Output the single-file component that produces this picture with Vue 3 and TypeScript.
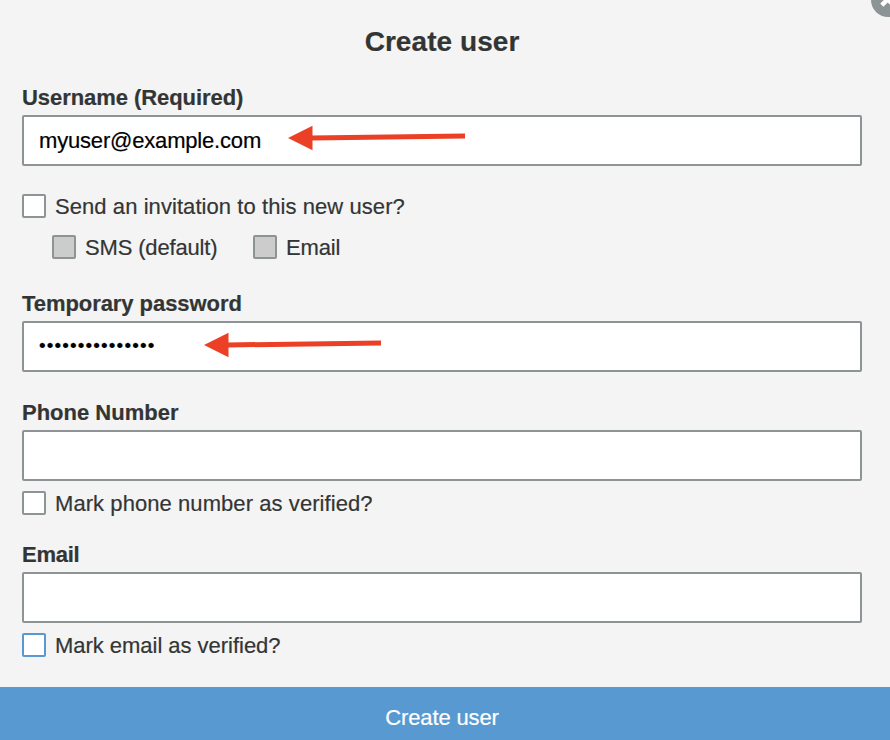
<script setup lang="ts">
import { ref } from 'vue'

const username = ref('myuser@example.com')
const password = ref('Passw0rd!Temp12')
const phone = ref('')
const email = ref('')
const sendInvite = ref(false)
</script>

<template>
  <form class="dialog" @submit.prevent>
    <button class="close" type="button" aria-label="Close">
      <svg width="34" height="34" viewBox="0 0 34 34">
        <circle cx="17" cy="17" r="17" fill="#8c9496" />
        <path d="M10.8 22.2L22.6 10.4M10.8 10.4L22.6 22.2" stroke="#fff" stroke-width="4.5" />
      </svg>
    </button>
    <h1>Create user</h1>

    <section class="field username">
      <label class="title t-user" for="username">Username (Required)</label>
      <div class="control">
        <input id="username" v-model="username" class="text" type="text" />
        <svg class="arrow first" width="178" height="26" viewBox="0 0 178 26">
          <path d="M0 13L24.5 0.7V25.3Z" fill="#eb4026" />
          <path d="M23 13L177 11" stroke="#eb4026" stroke-width="5" />
        </svg>
      </div>
    </section>

    <div class="invite">
      <label class="check"><input v-model="sendInvite" type="checkbox" /><span class="c-send">Send an invitation to this new user?</span></label>
      <div class="channels">
        <label class="check sms"><input type="checkbox" disabled /><span class="c-sms">SMS (default)</span></label>
        <label class="check"><input type="checkbox" disabled /><span class="c-email">Email</span></label>
      </div>
    </div>

    <section class="field password">
      <label class="title t-pass" for="password">Temporary password</label>
      <div class="control">
        <input id="password" v-model="password" class="text secret" type="password" />
        <svg class="arrow second" width="178" height="26" viewBox="0 0 178 26">
          <path d="M0 13L24.5 0.7V25.3Z" fill="#eb4026" />
          <path d="M23 13L177 11" stroke="#eb4026" stroke-width="5" />
        </svg>
      </div>
    </section>

    <section class="field phone">
      <label class="title" for="phone">Phone Number</label>
      <input id="phone" v-model="phone" class="text" type="text" />
      <label class="check"><input type="checkbox" /><span class="c-phone">Mark phone number as verified?</span></label>
    </section>

    <section class="field">
      <label class="title t-email" for="email">Email</label>
      <input id="email" v-model="email" class="text" type="text" />
      <label class="check"><input class="active" type="checkbox" /><span class="c-mark">Mark email as verified?</span></label>
    </section>

    <button class="submit" type="submit"><span>Create user</span></button>
  </form>
</template>

<style>
body {
  background: #f4f4f4;
}
</style>

<style scoped>
.dialog {
  position: relative;
  box-sizing: border-box;
  display: flex;
  flex-direction: column;
  height: 740px;
  overflow: hidden;
  padding: 22px 28px 0 22px;
  background: #f4f4f4;
  color: #333535;
  font: 22px/26px "Liberation Sans", Arial, sans-serif;
  -webkit-text-stroke-width: 0.2px;
}

.close {
  position: absolute;
  top: -17px;
  right: -15px;
  width: 34px;
  height: 34px;
  padding: 0;
  border: 0;
  background: none;
}

.close svg,
.arrow {
  display: block;
}

h1 {
  margin: 0 0 21px;
  font-size: 28px;
  line-height: 40px;
  letter-spacing: 0.06px;
  text-align: center;
}

.field {
  display: flex;
  flex-direction: column;
}

.title {
  height: 26px;
  margin-bottom: 6px;
  line-height: 30px;
  font-weight: 700;
}

.t-user,
.t-pass {
  letter-spacing: -0.06px;
}

.t-email {
  letter-spacing: -0.25px;
}

.control {
  position: relative;
}

.text {
  display: block;
  box-sizing: border-box;
  width: 100%;
  height: 51px;
  margin: 0;
  padding: 0 15px;
  border: 2px solid #8e9395;
  border-radius: 2px;
  outline: 0;
  background: #fff;
  color: #000;
  font: inherit;
  letter-spacing: -0.18px;
}

.secret {
  padding-bottom: 2px;
  font-size: 19px;
  letter-spacing: 1.11px;
}

.arrow {
  position: absolute;
}

.arrow.first {
  top: 10px;
  left: 265.5px;
}

.arrow.second {
  top: 11px;
  left: 181.5px;
}

.check {
  display: flex;
  align-items: center;
  gap: 9px;
  height: 24px;
}

.check input {
  flex: none;
  appearance: none;
  box-sizing: border-box;
  width: 24px;
  height: 24px;
  margin: 0;
  border: 2px solid #8e9395;
  border-radius: 2px;
  background: #fff;
}

.check input:disabled {
  background: #ccc;
}

.check input.active {
  border-color: #5899d1;
}

.check span {
  padding-top: 2px;
  white-space: nowrap;
}

.c-send,
.c-phone {
  letter-spacing: 0.07px;
}

.c-sms,
.c-email {
  letter-spacing: -0.16px;
}

.c-mark {
  letter-spacing: -0.03px;
}

.invite {
  margin: 28px 0 30px;
}

.channels {
  display: flex;
  margin: 17px 0 0 30px;
}

.sms {
  width: 201px;
}

.password {
  margin-bottom: 26px;
}

.phone {
  margin-bottom: 25px;
}

.field > .check {
  margin-top: 10px;
}

.submit {
  flex: none;
  height: 53px;
  margin: auto -28px 0 -22px;
  padding: 8px 6px 0 0;
  border: 0;
  background: #5899d1;
  color: #fff;
  font: inherit;
  letter-spacing: -0.12px;
}
</style>
